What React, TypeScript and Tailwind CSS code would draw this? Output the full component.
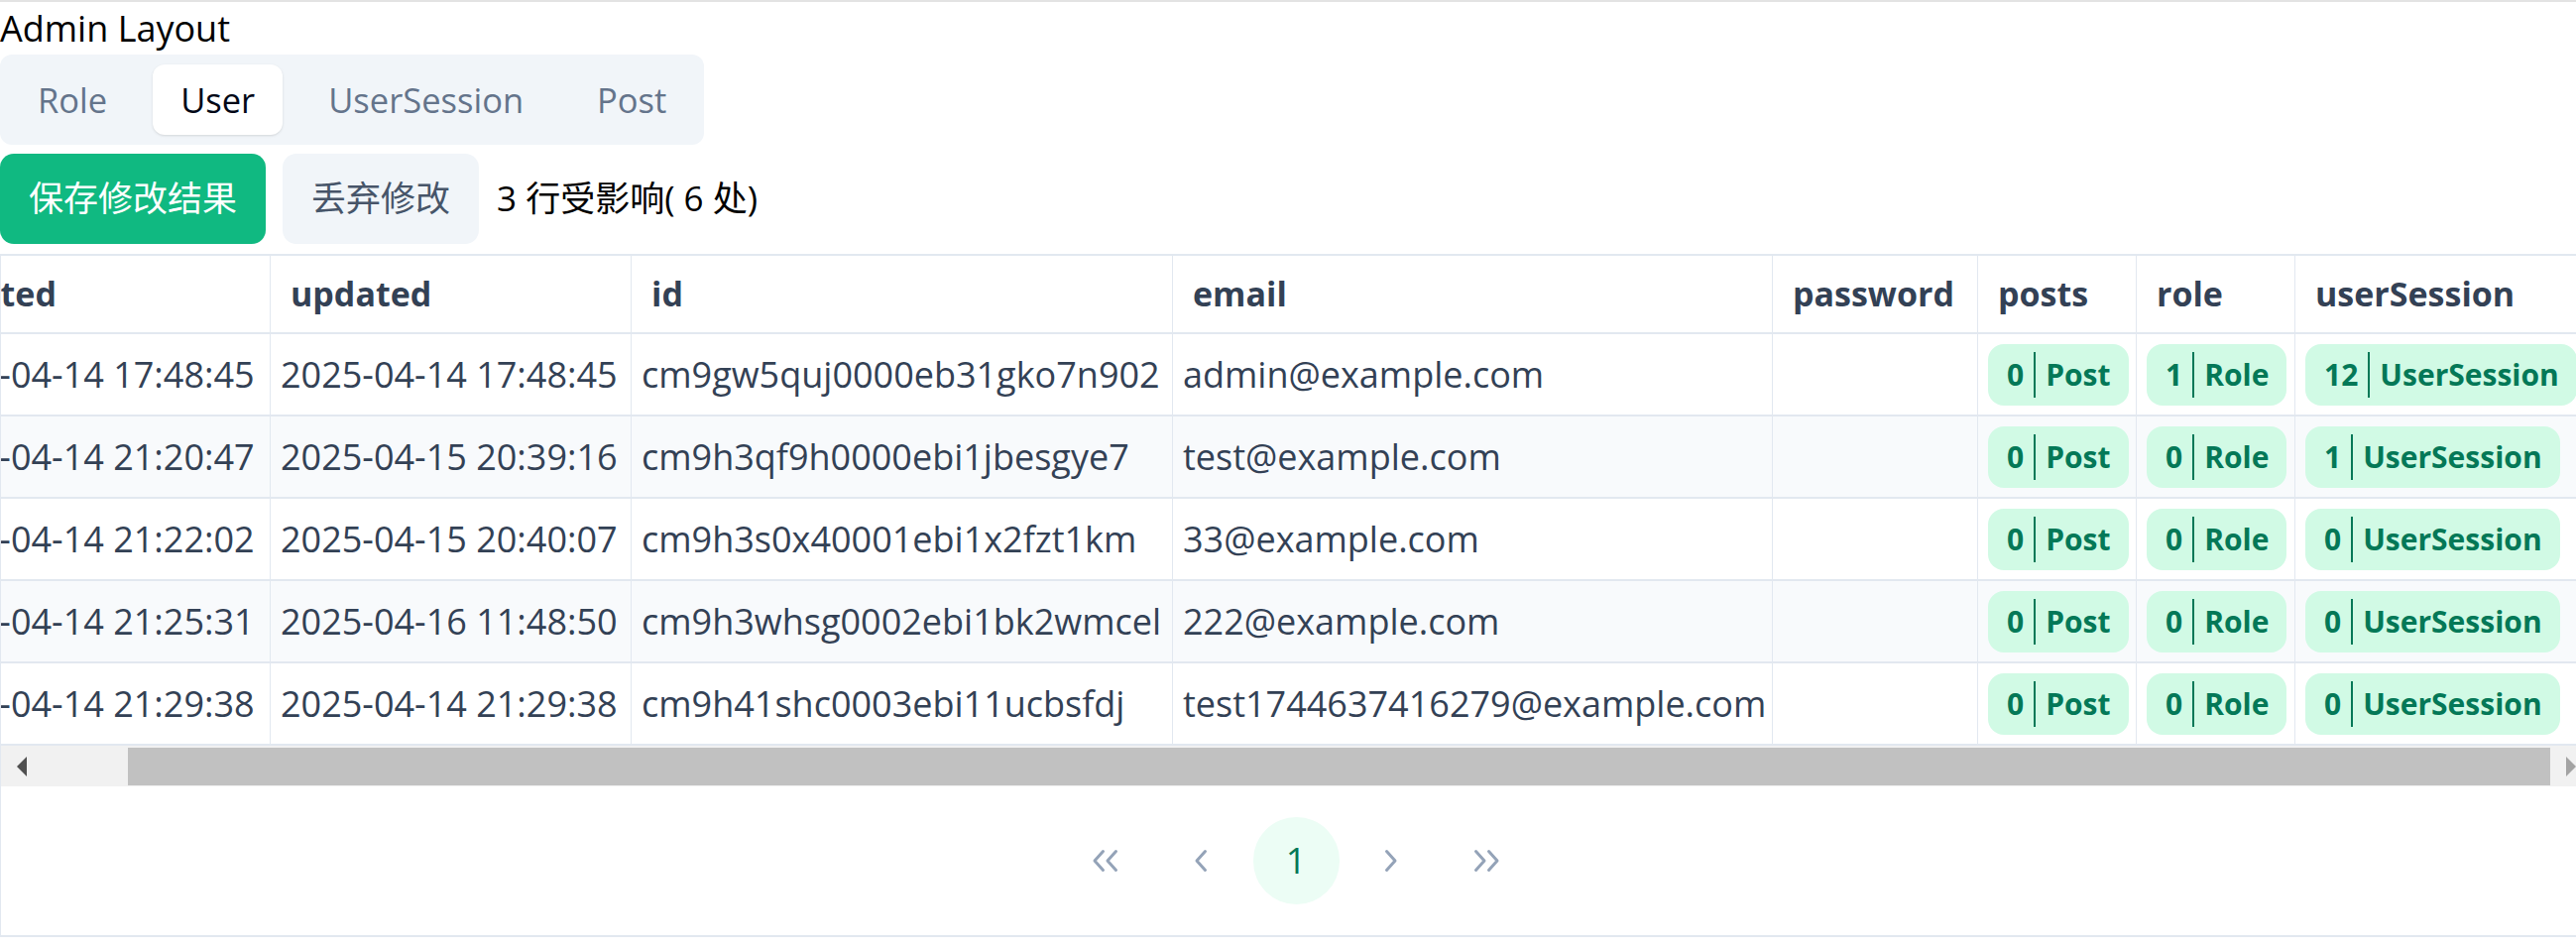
import { useLayoutEffect, useRef } from "react";

type Row = {
  created: string;
  updated: string;
  id: string;
  email: string;
  posts: number;
  role: number;
  sessions: number;
};

const rows: Row[] = [
  { created: "2025-04-14 17:48:45", updated: "2025-04-14 17:48:45", id: "cm9gw5quj0000eb31gko7n902", email: "admin@example.com", posts: 0, role: 1, sessions: 12 },
  { created: "2025-04-14 21:20:47", updated: "2025-04-15 20:39:16", id: "cm9h3qf9h0000ebi1jbesgye7", email: "test@example.com", posts: 0, role: 0, sessions: 1 },
  { created: "2025-04-14 21:22:02", updated: "2025-04-15 20:40:07", id: "cm9h3s0x40001ebi1x2fzt1km", email: "33@example.com", posts: 0, role: 0, sessions: 0 },
  { created: "2025-04-14 21:25:31", updated: "2025-04-16 11:48:50", id: "cm9h3whsg0002ebi1bk2wmcel", email: "222@example.com", posts: 0, role: 0, sessions: 0 },
  { created: "2025-04-14 21:29:38", updated: "2025-04-14 21:29:38", id: "cm9h41shc0003ebi11ucbsfdj", email: "test1744637416279@example.com", posts: 0, role: 0, sessions: 0 },
];

const headers = ["created", "updated", "id", "email", "password", "posts", "role", "userSession"];

function Badge({ count, label }: { count: number; label: string }) {
  return (
    <span className="inline-flex items-center h-[62px] rounded-[16px] bg-[#d1fae5] text-[#047857] font-bold text-[30px] leading-none pl-[19px] pr-[18px] whitespace-nowrap">
      <span>{count}</span>
      <span className="w-[2px] h-[46px] bg-[#047857] mx-[10px]" />
      <span>{label}</span>
    </span>
  );
}

function Single({ dir }: { dir: "l" | "r" }) {
  return (
    <svg width="14" height="24" viewBox="0 0 14 24" fill="none" stroke="#94a3b8" strokeWidth="3" strokeLinecap="round" strokeLinejoin="round">
      {dir === "l" ? <polyline points="11.5,2.5 3,12 11.5,21.5" /> : <polyline points="2.5,2.5 11,12 2.5,21.5" />}
    </svg>
  );
}

function Double({ dir }: { dir: "l" | "r" }) {
  return (
    <svg width="28" height="24" viewBox="0 0 28 24" fill="none" stroke="#94a3b8" strokeWidth="3" strokeLinecap="round" strokeLinejoin="round">
      {dir === "l" ? (
        <>
          <polyline points="11.5,2.5 3,12 11.5,21.5" />
          <polyline points="24.5,2.5 16,12 24.5,21.5" />
        </>
      ) : (
        <>
          <polyline points="3.5,2.5 12,12 3.5,21.5" />
          <polyline points="16.5,2.5 25,12 16.5,21.5" />
        </>
      )}
    </svg>
  );
}

function Triangle({ dir, color }: { dir: "l" | "r"; color: string }) {
  return (
    <svg width="10" height="20" viewBox="0 0 10 20">
      {dir === "l" ? <polygon points="10,0 0,10 10,20" fill={color} /> : <polygon points="0,0 10,10 0,20" fill={color} />}
    </svg>
  );
}

export default function App() {
  const scrollRef = useRef<HTMLDivElement>(null);
  useLayoutEffect(() => {
    const el = scrollRef.current;
    if (el) el.scrollLeft = el.scrollWidth;
  }, []);

  const thCls =
    "pl-[20px] pr-[10px] text-left align-middle font-bold text-[34px] text-[#334155] border-t-2 border-b-2 border-r border-[#e2e8f0] whitespace-nowrap overflow-hidden bg-white";
  const tdCls =
    "px-[10px] align-middle text-[36px] text-[#334155] border-b-2 border-r border-[#e2e8f0] whitespace-nowrap overflow-hidden";

  return (
    <div className="w-[2598px] h-[957px] overflow-hidden bg-white font-['Open_Sans','Noto_Sans_CJK_SC',sans-serif]">
      <div className="w-[2613px] border-t-2 border-[#e3e3e3]">
        <div className="h-[53px] leading-[53px] text-[36px] text-black">Admin Layout</div>

        <div className="inline-flex h-[91px] p-[10px] gap-[18px] rounded-[12px] bg-[#f1f5f9]">
          {["Role", "User", "UserSession", "Post"].map((t) => (
            <div
              key={t}
              className={
                t === "User"
                  ? "flex items-center h-full px-[28px] rounded-[12px] bg-white text-[#020817] text-[34.5px] shadow-sm"
                  : "flex items-center h-full px-[28px] rounded-[12px] text-[#64748b] text-[34.5px]"
              }
            >
              {t}
            </div>
          ))}
        </div>

        <div className="flex items-center h-[91px] mt-[9px] gap-[17px]">
          <button className="h-full px-[29px] rounded-[14px] bg-[#10b981] text-white text-[35px]">保存修改结果</button>
          <button className="h-full px-[29px] rounded-[14px] bg-[#f1f5f9] text-[#475569] text-[35px]">丢弃修改</button>
          <span className="ml-[1px] text-[35px] text-black">3 行受影响( 6 处)</span>
        </div>

        <div className="mt-[10px] border-l border-b-2 border-[#e2e8f0]">
          <div ref={scrollRef} className="overflow-hidden">
            <table className="table-fixed border-separate border-spacing-0 w-[2706px]">
              <colgroup>
                <col className="w-[366px]" />
                <col className="w-[364px]" />
                <col className="w-[546px]" />
                <col className="w-[605px]" />
                <col className="w-[207px]" />
                <col className="w-[160px]" />
                <col className="w-[160px]" />
                <col className="w-[298px]" />
              </colgroup>
              <thead>
                <tr className="h-[81px]">
                  {headers.map((h) => (
                    <th key={h} className={thCls}>
                      {h}
                    </th>
                  ))}
                </tr>
              </thead>
              <tbody>
                {rows.map((r, i) => (
                  <tr key={r.id} className={i % 2 === 1 ? "h-[83px] bg-[#f8fafc]" : "h-[83px] bg-white"}>
                    <td className={tdCls}>{r.created}</td>
                    <td className={tdCls}>{r.updated}</td>
                    <td className={tdCls}>{r.id}</td>
                    <td className={tdCls}>{r.email}</td>
                    <td className={tdCls}></td>
                    <td className={tdCls}>
                      <Badge count={r.posts} label="Post" />
                    </td>
                    <td className={tdCls}>
                      <Badge count={r.role} label="Role" />
                    </td>
                    <td className={tdCls}>
                      <Badge count={r.sessions} label="UserSession" />
                    </td>
                  </tr>
                ))}
              </tbody>
            </table>
          </div>

          {/* horizontal scrollbar */}
          <div className="flex h-[41px] bg-[#f1f1f1]">
            <div className="w-[41px] flex items-center justify-center">
              <Triangle dir="l" color="#505050" />
            </div>
            <div className="flex-1 flex pl-[87px] pt-[2px] pb-[1px]">
              <div className="flex-1 bg-[#c1c1c1]" />
            </div>
            <div className="w-[41px] flex items-center justify-center">
              <Triangle dir="r" color="#a3a3a3" />
            </div>
          </div>

          <div className="flex items-center justify-center gap-[9px] h-[150px]">
            <div className="w-[87px] h-[88px] rounded-full flex items-center justify-center">
              <Double dir="l" />
            </div>
            <div className="w-[87px] h-[88px] rounded-full flex items-center justify-center">
              <Single dir="l" />
            </div>
            <div className="w-[87px] h-[88px] rounded-full flex items-center justify-center bg-[#ecfdf5] text-[#047857] text-[36px]">
              1
            </div>
            <div className="w-[87px] h-[88px] rounded-full flex items-center justify-center">
              <Single dir="r" />
            </div>
            <div className="w-[87px] h-[88px] rounded-full flex items-center justify-center">
              <Double dir="r" />
            </div>
          </div>
        </div>
      </div>
    </div>
  );
}
